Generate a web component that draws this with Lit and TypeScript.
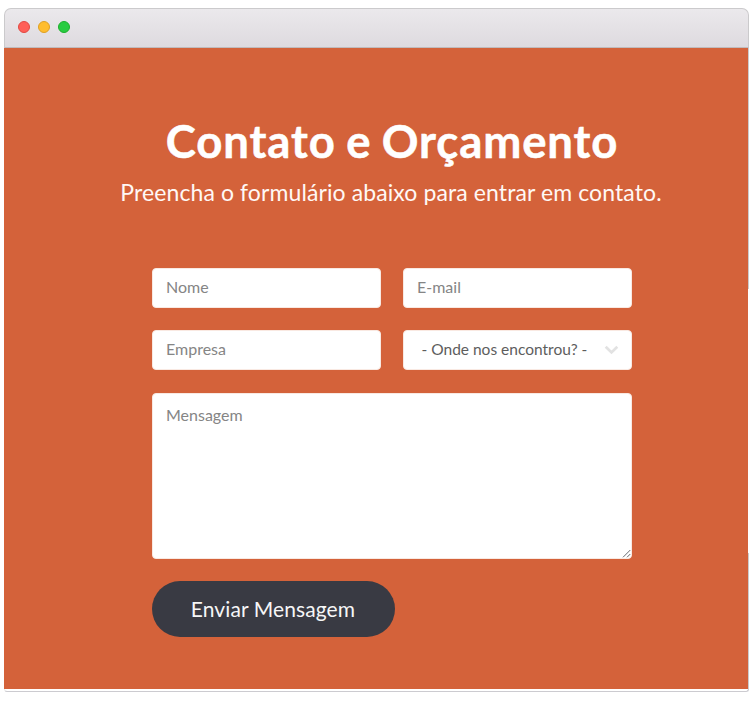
import { LitElement, html, css, svg } from "lit";
import { customElement } from "lit/decorators.js";

@customElement("window-bar")
class WindowBar extends LitElement {
  static styles = css`
    :host {
      display: flex;
      align-items: center;
      gap: 8px;
      box-sizing: border-box;
      height: 40px;
      padding: 0 0 2px 13px;
      border: 1px solid #cbcacc;
      border-bottom-color: #c0bbbd;
      border-radius: 7px 7px 0 0;
      background: linear-gradient(#ebe9ec, #dedadf);
    }
    .dot {
      box-sizing: border-box;
      width: 12px;
      height: 12px;
      border-radius: 50%;
    }
    .close { background: #ff5f58; border: 1px solid #e14942; }
    .minimize { background: #ffbd2e; border: 1px solid #dfa023; }
    .zoom { background: #29cc41; border: 1px solid #1daf2c; }
  `;
  render() {
    return html`
      <span class="dot close"></span>
      <span class="dot minimize"></span>
      <span class="dot zoom"></span>
    `;
  }
}

@customElement("contact-form")
class ContactForm extends LitElement {
  static styles = css`
    :host {
      display: block;
      width: 480px;
    }
    form {
      display: grid;
      grid-template-columns: 229px 229px;
      gap: 22px;
    }
    .field {
      box-sizing: border-box;
      display: flex;
      align-items: center;
      height: 40px;
      padding: 0 13px 2px;
      border: 1px solid #f9e9e2;
      border-radius: 4px;
      background: #fff;
      color: #858585;
      font-size: 16px;
      line-height: 20px;
    }
    .select {
      justify-content: space-between;
      padding: 0 12px 2px 17.5px;
      color: #5d5d5d;
      font-size: 15.5px;
    }
    .message {
      position: relative;
      grid-column: 1 / -1;
      align-items: flex-start;
      height: 166px;
      margin-top: 1px;
      padding-top: 11px;
    }
    .chevron { margin-top: 2px; }
    .grip {
      position: absolute;
      right: 0;
      bottom: 0;
    }
    .submit {
      justify-self: start;
      width: 243px;
      height: 56px;
      padding: 0 1px 2px 0;
      border: 0;
      border-radius: 28px;
      background: #393a43;
      color: #f6f6f7;
      font: 400 21px "Lato", sans-serif;
      letter-spacing: 0.1px;
      white-space: nowrap;
    }
  `;
  render() {
    return html`
      <form>
        <div class="field">Nome</div>
        <div class="field">E-mail</div>
        <div class="field">Empresa</div>
        <div class="field select">
          <span>- Onde nos encontrou? -</span>
          <svg class="chevron" width="15" height="10" viewBox="0 0 15 10">
            ${svg`<path d="M1.7 1.8 7.5 7.4 13.3 1.8" fill="none" stroke="#e2e2e2" stroke-width="2.8"/>`}
          </svg>
        </div>
        <div class="field message">
          <span>Mensagem</span>
          <svg class="grip" width="9" height="9" viewBox="0 0 9 9">
            ${svg`<path d="M1 8.3 8.3 1M5 8.3 8.3 5" fill="none" stroke="#666a70" stroke-width="1"/>`}
          </svg>
        </div>
        <button class="submit" type="button">Enviar Mensagem</button>
      </form>
    `;
  }
}

@customElement("app-root")
class AppRoot extends LitElement {
  static styles = css`
    :host {
      display: block;
      box-sizing: border-box;
      height: 715px;
      padding: 8px 4px 0;
      background: #fff;
      font-family: "Lato", sans-serif;
    }
    .window {
      display: grid;
      grid-template-columns: 744px 1px;
      width: 745px;
    }
    window-bar { grid-column: 1 / -1; }
    .page {
      box-sizing: border-box;
      height: 641px;
      padding-left: 32px;
      background: #d4623a;
      display: flex;
      flex-direction: column;
      align-items: center;
      color: #fff;
    }
    .edge {
      background: linear-gradient(#cbcbcd 0 241px, #fff 241px 505px, #cbcbcd 505px);
    }
    .base {
      grid-column: 1 / -1;
      box-sizing: border-box;
      height: 3px;
      border: 1px solid #cccbd0;
      border-top: 0;
      border-left-color: #eee;
      border-radius: 0 0 4px 4px;
    }
    h1 {
      margin: 66px 0 0;
      font-size: 45.5px;
      line-height: 54px;
      font-weight: 700;
      letter-spacing: 0.9px;
      word-spacing: -1.5px;
      -webkit-text-stroke: 0.5px #fff;
      white-space: nowrap;
    }
    p {
      margin: 9px 2px 0 0;
      font-size: 23px;
      line-height: 30px;
      letter-spacing: 0.1px;
      white-space: nowrap;
      color: #fff8f5;
    }
    contact-form { margin-top: 61px; }
  `;
  render() {
    return html`
      <div class="window">
        <window-bar></window-bar>
        <main class="page">
          <h1>Contato e Orçamento</h1>
          <p>Preencha o formulário abaixo para entrar em contato.</p>
          <contact-form></contact-form>
        </main>
        <div class="edge"></div>
        <div class="base"></div>
      </div>
    `;
  }
}
